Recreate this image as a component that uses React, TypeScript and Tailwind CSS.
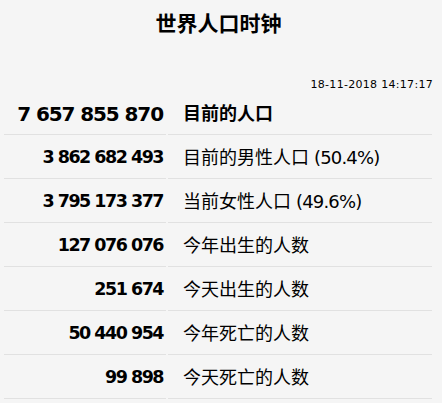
import React from "react";

const rows = [
  { n: "3 862 682 493", l: "目前的男性人口", p: "(50.4%)" },
  { n: "3 795 173 377", l: "当前女性人口", p: "(49.6%)" },
  { n: "127 076 076", l: "今年出生的人数" },
  { n: "251 674", l: "今天出生的人数" },
  { n: "50 440 954", l: "今年死亡的人数" },
  { n: "99 898", l: "今天死亡的人数" },
];

const font = { fontFamily: '"DejaVu Sans","Noto Sans CJK SC",sans-serif' };

export default function App() {
  return (
    <div className="w-[442px] h-[403px] overflow-hidden bg-[#f5f5f5] text-black" style={font}>
      <h1 className="pt-[10px] pr-[5px] text-center text-[21px] leading-[24px] font-bold [font-family:'Noto_Sans_CJK_SC',sans-serif]">
        世界人口时钟
      </h1>
      <div className="mt-[44px] pr-[9px] text-right text-[11px] leading-[13px] tracking-[0.3px]">
        18-11-2018 14:17:17
      </div>
      <div className="ml-[4px] mt-[2px] w-[428px] grid grid-cols-[162px_264px] gap-x-[2px] gap-y-[2px]">
        <div className="h-[42px] border-b border-[#e1e1e1] flex items-center justify-end pr-[3px] text-[20px] font-bold tracking-[-1.1px]">
          7 657 855 870
        </div>
        <div className="h-[42px] border-b border-[#e1e1e1] flex items-center pl-[15px] text-[18px] font-bold">
          目前的人口
        </div>
        {rows.map((r) => (
          <React.Fragment key={r.n}>
            <div className="h-[42px] border-b border-[#e1e1e1] flex items-center justify-end pr-[3px] text-[17.5px] font-bold tracking-[-1.5px]">
              {r.n}
            </div>
            <div className="h-[42px] border-b border-[#e1e1e1] flex items-center pl-[15px] text-[18px] whitespace-pre">
              {r.l}
              {r.p ? <span className="tracking-[-0.8px]">{" " + r.p}</span> : null}
            </div>
          </React.Fragment>
        ))}
      </div>
    </div>
  );
}
